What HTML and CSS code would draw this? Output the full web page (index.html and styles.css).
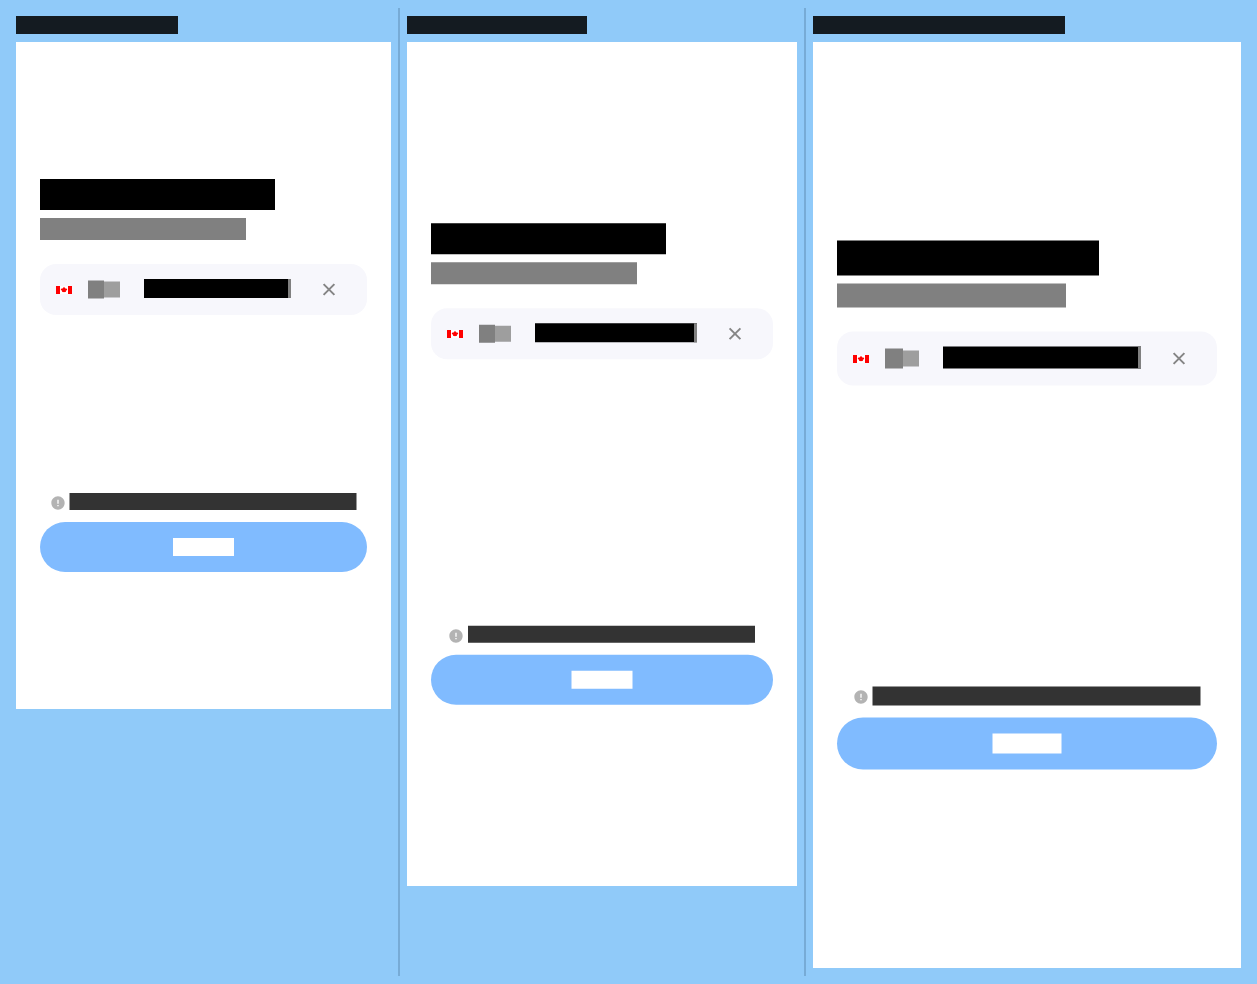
FILE: index.html
```html
<!DOCTYPE html>
<html lang="en">
<head>
<meta charset="utf-8">
<title>Device preview</title>
<link rel="stylesheet" href="styles.css">
</head>
<body>
<svg class="defs" aria-hidden="true">
  <symbol id="flag" viewBox="0 0 16 8">
    <path fill="#fff" d="M0 0h16v8H0z"/>
    <path fill="#f00" d="M0 0h4v8H0zM12 0h4v8h-4z"/>
    <path fill="#f00" d="M8 .7l.9 1.4.5-.2v.9l.8-.2 1 .3-.2 1-1.3 1.1.3 1.1-1.6-.2v.4h-.8v-.4L6 6.100l.3-1.100L5 3.900l-.2-1 1-.3.8.2v-.9l.5.2z"/>
  </symbol>
  <symbol id="close" viewBox="0 0 24 24">
    <path d="M5.500 5.500L18.500 18.500M18.500 5.500L5.500 18.500"/>
  </symbol>
  <symbol id="info" viewBox="0 0 24 24">
    <path d="M12 2C6.48 2 2 6.48 2 12s4.48 10 10 10 10-4.48 10-10S17.52 2 12 2zm1 15h-2v-2h2v2zm0-4h-2V7h2v6z"/>
  </symbol>
</svg>
<main class="devices">
  <section class="device small">
    <div class="label"></div>
    <div class="screen">
      <div class="form">
        <div class="title"></div>
        <div class="subtitle"></div>
        <div class="field">
          <svg class="flag"><use href="#flag"/></svg>
          <div class="code"></div><div class="arrow"></div>
          <div class="number"></div>
          <svg class="close"><use href="#close"/></svg>
        </div>
      </div>
      <div class="footer">
        <div class="notice"><svg class="info"><use href="#info"/></svg><div class="message"></div></div>
        <div class="button"><div class="caption"></div></div>
      </div>
    </div>
  </section>
  <div class="divider"></div>
  <section class="device medium">
    <div class="label"></div>
    <div class="screen">
      <div class="form">
        <div class="title"></div>
        <div class="subtitle"></div>
        <div class="field">
          <svg class="flag"><use href="#flag"/></svg>
          <div class="code"></div><div class="arrow"></div>
          <div class="number"></div>
          <svg class="close"><use href="#close"/></svg>
        </div>
      </div>
      <div class="footer">
        <div class="notice"><svg class="info"><use href="#info"/></svg><div class="message"></div></div>
        <div class="button"><div class="caption"></div></div>
      </div>
    </div>
  </section>
  <div class="divider"></div>
  <section class="device large">
    <div class="label"></div>
    <div class="screen">
      <div class="form">
        <div class="title"></div>
        <div class="subtitle"></div>
        <div class="field">
          <svg class="flag"><use href="#flag"/></svg>
          <div class="code"></div><div class="arrow"></div>
          <div class="number"></div>
          <svg class="close"><use href="#close"/></svg>
        </div>
      </div>
      <div class="footer">
        <div class="notice"><svg class="info"><use href="#info"/></svg><div class="message"></div></div>
        <div class="button"><div class="caption"></div></div>
      </div>
    </div>
  </section>
</main>
</body>
</html>
```
FILE: styles.css
```css
* { box-sizing: border-box; }
body {
  margin: 0;
  height: 984px;
  background: #90caf9;
  font-family: Roboto, sans-serif;
  overflow: hidden;
}
.defs { display: none; }
.devices { display: flex; height: 984px; padding: 8px 16px; }
.divider { width: 2px; margin: 0 7px; background: #77abd6; flex: none; }
.device { padding-top: 8px; flex: none; }
.label { width: var(--label); height: 18px; margin-bottom: 8px; background: #141b21; }
.screen { width: var(--w); height: var(--h); padding: var(--top) 24px 0; background: #fff; }

.small {
  --label: 162px; --w: 375px; --h: 667px; --top: 137px; --fy: 0px; --footer-fy: 0px;
  --title-w: 235px; --title-h: 31px; --sub-w: 206px; --sub-h: 22px;
  --field-h: 51px; --flag-y: 22px; --code-w: 16px; --code-h: 18px; --code-y: 16px; --arrow-y: 17px;
  --half: .5px; --number-w: 147px; --number-h: 19px; --close-y: 15px;
  --gap: 178px; --icon-x: 10px; --message-gap: 3px; --message-w: 287px; --message-h: 17px; --message-fx: .5px; --icon-fy: 0px;
  --button-h: 50px; --caption-w: 61px; --caption-h: 18px; --caption-x: 133px; --caption-fx: 0px;
}
.medium {
  --label: 180px; --w: 390px; --h: 844px; --top: 181px; --fy: .25px; --footer-fy: .75px;
  --title-w: 235px; --title-h: 31px; --sub-w: 206px; --sub-h: 22px;
  --field-h: 51px; --flag-y: 22px; --code-w: 16px; --code-h: 18px; --code-y: 16px; --arrow-y: 17px;
  --half: .5px; --number-w: 162px; --number-h: 19px; --close-y: 15px;
  --gap: 266px; --icon-x: 17px; --message-gap: 4px; --message-w: 287px; --message-h: 17px; --message-fx: 0px; --icon-fy: .25px;
  --button-h: 50px; --caption-w: 61px; --caption-h: 18px; --caption-x: 140px; --caption-fx: .5px;
}
.large {
  --label: 252px; --w: 428px; --h: 926px; --top: 198px; --fy: .5px; --footer-fy: .5px;
  --title-w: 262px; --title-h: 35px; --sub-w: 229px; --sub-h: 24px;
  --field-h: 54px; --flag-y: 24px; --code-w: 18px; --code-h: 20px; --code-y: 17px; --arrow-y: 19px;
  --half: 0px; --number-w: 198px; --number-h: 22px; --close-y: 17px;
  --gap: 301px; --icon-x: 16px; --message-gap: 3px; --message-w: 328px; --message-h: 19px; --message-fx: .5px; --icon-fy: .5px;
  --button-h: 52px; --caption-w: 69px; --caption-h: 20px; --caption-x: 155px; --caption-fx: .5px;
}

.form { transform: translateY(var(--fy)); }
.title { width: var(--title-w); height: var(--title-h); background: #000; }
.subtitle { width: var(--sub-w); height: var(--sub-h); margin: 8px 0 24px; background: gray; }
.field {
  display: flex;
  align-items: flex-start;
  height: var(--field-h);
  padding: 0 28px 0 16px;
  border-radius: 16px;
  background: #f7f7fc;
}
.flag { width: 16px; height: 8px; margin: var(--flag-y) 16px 0 0; transform: translateY(calc(-1 * var(--fy))); }
.code { width: var(--code-w); height: var(--code-h); margin-top: var(--code-y); background: gray; transform: translateY(var(--half)); }
.arrow { width: 16px; height: 16px; margin-top: var(--arrow-y); background: #9e9e9e; transform: translateY(var(--half)); }
.number {
  width: var(--number-w);
  height: var(--number-h);
  margin: 15px 0 0 24px;
  background: #000;
  border-right: 3px solid gray;
}
.close {
  width: 20px;
  height: 20px;
  margin: var(--close-y) 0 0 auto;
  fill: none;
  stroke: #868686;
  stroke-width: 2.4px;
  transform: translateY(var(--half));
}

.footer { margin-top: var(--gap); transform: translateY(var(--footer-fy)); }
.notice { display: flex; align-items: flex-start; height: var(--message-h); padding-left: var(--icon-x); }
.info { width: 16px; height: 16px; margin: 2px var(--message-gap) 0 0; fill: #b3b3b3; transform: translateY(var(--icon-fy)); }
.message { width: var(--message-w); height: var(--message-h); background: #333; transform: translateX(var(--message-fx)); }
.button { height: var(--button-h); margin-top: 12px; padding: 16px 0 0 var(--caption-x); border-radius: 26px; background: #80bbff; }
.caption { width: var(--caption-w); height: var(--caption-h); background: #fff; transform: translateX(var(--caption-fx)); }
```
